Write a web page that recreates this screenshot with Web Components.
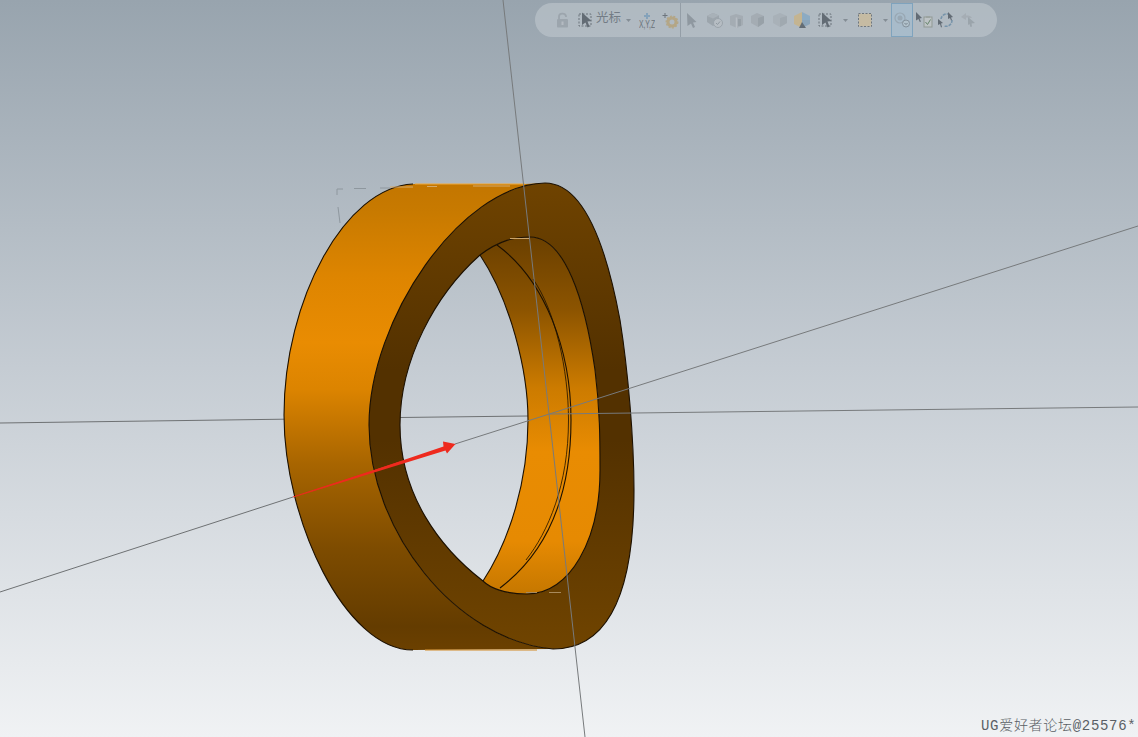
<!DOCTYPE html>
<html><head><meta charset="utf-8">
<style>html,body{margin:0;padding:0;height:100%;overflow:hidden}</style>
</head><body>
<template id="tool-t"><style>
:host{display:flex;align-items:center;justify-content:center;flex:none;height:100%;box-sizing:border-box;width:var(--w,22px)}
:host([active]){background:rgba(150,190,220,.32);border:1px solid #7fa3bd}
::slotted(svg){display:block;overflow:visible;opacity:.88}
</style><slot></slot></template>
<ug-viewport>
<ug-model slot="canvas"></ug-model>
<ug-toolbar slot="over">
<ug-tool style="--w:19px"><svg width="14" height="16" viewBox="0 0 14 16"><path d="M3 7V4.500C3 1 9 .5 10 4v1" fill="none" stroke="#9aa3ab" stroke-width="1.800"/><rect x="1" y="7" width="11" height="8.500" rx="1" fill="#9aa3ab"/><rect x="5.500" y="9.500" width="2" height="3.500" fill="#b5bcc3"/></svg></ug-tool>
<ug-tool style="--w:20px;margin-left:4px"><svg width="16" height="16" viewBox="0 0 16 16"><rect x="1" y="2" width="12" height="12" fill="none" stroke="#636b73" stroke-width="1" stroke-dasharray="2 1.500"/><path d="M4 .5 13.500 9 9.500 9.500 11.500 14.500 9.500 15.500 7.500 10.500 4 13Z" fill="#59626b"/></svg></ug-tool>
<ug-label style="--w:26px">光标</ug-label>
<ug-tool style="--w:13px"><svg width="5" height="3" viewBox="0 0 5 3"><path d="M0 0H5L2.500 3Z" fill="#7d868e"/></svg></ug-tool>
<ug-tool style="--w:24px"><svg width="18" height="15" viewBox="0 0 18 15"><path d="M8 0h2v2h2v2h-2v2H8V4H6V2h2Z" fill="#7f9fba"/><text x="1" y="14.500" textLength="16" lengthAdjust="spacingAndGlyphs" font-family="Liberation Sans" font-size="10" fill="#5f6871">X,Y,Z</text></svg></ug-tool>
<ug-tool style="--w:21px"><svg width="16" height="16" viewBox="0 0 16 16"><path d="M3 1v5M.5 3.500h5" stroke="#646c74" fill="none"/><circle cx="10" cy="10" r="4" fill="none" stroke="#b5a47e" stroke-width="3"/><circle cx="10" cy="10" r="5.800" fill="none" stroke="#b5a47e" stroke-width="1.300" stroke-dasharray="2 1.500"/></svg></ug-tool>
<ug-sep></ug-sep>
<ug-tool style="--w:22px"><svg width="10" height="15" viewBox="0 0 10 15"><path d="M0 0 9.500 9 6 9.500 8 14 6 15 4 10.500 .5 13Z" fill="#8a939b"/></svg></ug-tool>
<ug-tool style="--w:23px"><svg width="17" height="16" viewBox="0 0 17 16"><path d="M1 4 7 1 13 3.500V10L7 14 1 10Z" fill="#9aa3aa"/><path d="M1 4 7 6.500 13 3.500 7 1Z" fill="#a8b0b7"/><circle cx="12" cy="11" r="4.500" fill="#b7bec4" stroke="#98a1a8"/><path d="M10 11l1.500 1.500 2.500-3" fill="none" stroke="#8b949c"/></svg></ug-tool>
<ug-tool style="--w:21px"><svg width="14" height="15" viewBox="0 0 14 15"><path d="M0 3 6 1 13 3V12L7 15 0 12Z" fill="#a3abb2"/><path d="M6.500 4.500V15" stroke="#b8bfc5" stroke-width="1.500"/><path d="M8 6h3v7H8Z" fill="#939ca3"/></svg></ug-tool>
<ug-tool style="--w:22px"><svg width="14" height="14" viewBox="0 0 14 14"><path d="M0 3 6 0 13 3V10L7 14 0 10Z" fill="#a3abb2"/><path d="M7 5 13 3V10L7 14Z" fill="#959ea5"/></svg></ug-tool>
<ug-tool style="--w:22px"><svg width="14" height="14" viewBox="0 0 14 14"><path d="M0 3 7 0 14 3V10L7 14 0 10Z" fill="#a8b0b7"/><path d="M7 5 14 3V10L7 14Z" fill="#9ea7ae"/></svg></ug-tool>
<ug-tool style="--w:22px"><svg width="16" height="16" viewBox="0 0 16 16"><path d="M8 0 16 4V8H8Z" fill="#88a9c4"/><path d="M8 0 0 4V12L8 16V8Z" fill="#c7b48b"/><path d="M8 8H16V12L8 16Z" fill="#86a1b8"/><path d="M8 10 12 16H5Z" fill="#59626b"/></svg></ug-tool>
<ug-tool style="--w:26px"><svg width="16" height="16" viewBox="0 0 16 16"><rect x="1" y="2" width="12" height="12" fill="none" stroke="#636b73" stroke-width="1" stroke-dasharray="2 1.500"/><path d="M4 .5 13.500 9 9.500 9.500 11.500 14.500 9.500 15.500 7.500 10.500 4 13Z" fill="#59626b"/></svg></ug-tool>
<ug-tool style="--w:12px"><svg width="5" height="3" viewBox="0 0 5 3"><path d="M0 0H5L2.500 3Z" fill="#7d868e"/></svg></ug-tool>
<ug-tool style="--w:28px"><svg width="14" height="14" viewBox="0 0 14 14"><rect x=".5" y=".5" width="13" height="13" fill="#c9bc9f" stroke="#666e76" stroke-dasharray="2 1.500"/></svg></ug-tool>
<ug-tool style="--w:12px"><svg width="5" height="3" viewBox="0 0 5 3"><path d="M0 0H5L2.500 3Z" fill="#7d868e"/></svg></ug-tool>
<ug-tool active style="--w:22px"><svg width="16" height="16" viewBox="0 0 16 16"><circle cx="6" cy="6" r="5" fill="none" stroke="#97a5b0" stroke-width="1.200"/><circle cx="6" cy="6" r="2.500" fill="#97a5b0"/><circle cx="12" cy="11.500" r="3.500" fill="#b3c2cc" stroke="#808c96"/><path d="M10.500 11 12 12.500 13.500 11" fill="none" stroke="#6f7a84"/></svg></ug-tool>
<ug-tool style="--w:22px"><svg width="17" height="16" viewBox="0 0 17 16"><path d="M0 0 6 6 3.500 6.500 5 9.500 3.800 10 2.500 7 0 8.500Z" fill="#59626b"/><rect x="8" y="5" width="8" height="10" fill="#bfc5c6" stroke="#8d958f"/><rect x="10" y="4" width="4" height="2" fill="#9aa29d"/><path d="M9.500 10l2 2.500 3-5" fill="none" stroke="#5e7f62"/></svg></ug-tool>
<ug-tool style="--w:22px"><svg width="16" height="16" viewBox="0 0 16 16"><path d="M3 7A6 6 0 0 1 10 2M14 8A6 6 0 0 1 6 14" fill="none" stroke="#6f8fa8" stroke-width="1.500" stroke-dasharray="3 1"/><path d="M0 7 5 11 3 11.500 4 15 3 15.500 2 12 0 13Z" fill="#59626b"/><path d="M10 0 15 5 13 5.500 14 8 13 8.500 12 6 10 7Z" fill="#59626b"/></svg></ug-tool>
<ug-tool style="--w:21px"><svg width="14" height="14" viewBox="0 0 14 14"><path d="M0 4 5 0V2.500C8 2.500 10 3 11 5L8 5C7 4.500 6 4.500 5 4.500V7Z" fill="#a4acb3"/><path d="M7 4 14 10 10.500 10.500 11 13.500 9.500 14 8.500 11 7 12Z" fill="#98a1a8"/></svg></ug-tool>
</ug-toolbar>
<ug-watermark slot="over2">UG爱好者论坛@25576*</ug-watermark>
</ug-viewport>
<script>
function mk(tag, html){
  customElements.define(tag, class extends HTMLElement{
    constructor(){super();this.attachShadow({mode:'open'}).innerHTML=html;}
  });
}
mk('ug-viewport',`<style>:host{display:block;position:relative;width:1138px;height:737px;overflow:hidden;background:linear-gradient(#98a4ae,#c5ccd3 50%,#f0f2f4)}</style><slot name="canvas"></slot><slot name="over"></slot><slot name="over2"></slot>`);
mk('ug-tool',document.getElementById('tool-t').innerHTML);
mk('ug-sep',`<style>:host{display:block;flex:none;width:1px;height:100%;background:#949ea7}</style>`);
mk('ug-label',`<style>:host{display:block;flex:none;width:var(--w);font:12.500px/30px "Noto Sans CJK SC",sans-serif;color:#737c85;white-space:nowrap;margin-top:-6px}</style><slot></slot>`);
mk('ug-toolbar',`<style>:host{position:absolute;left:535px;top:3px;width:462px;height:34px;box-sizing:border-box;padding-left:18px;display:flex;align-items:center;background:rgba(190,198,205,.62);border-radius:17px;}</style><slot></slot>`);
mk('ug-watermark',`<style>:host{position:absolute;left:981px;top:717px;font:300 14px/18px "Liberation Mono","Noto Sans CJK SC",monospace;letter-spacing:.7px;color:#5a5f65;white-space:nowrap}</style><slot></slot>`);

const outerLeft='M413 184C345 187 284 300 284 415C284 520 345 650 413 650';
const faceLeft='M545 183C460 185 369 320 369 425C369 530 455 640 553 649';
const faceLeftRev='C455 640 369 530 369 425C369 320 460 185 545 183';
const faceRight='C585 183 607 250 620 320C628 370 634 440 634 490C634 590 610 649 553 649';
const holeUR='C500 240 515 237 530 237C565 237 585 300 595 370C600 410 600 440 600 470C600 540 570 594 527 594C505 594 490 588 483 581';
const holeL='C440 548 400 495 400 425C400 360 435 295 480 255';
const innerEdge='M480 255C510 300 528 370 528 420C528 480 510 540 483 581';
const innerEdgeRev='C510 540 528 480 528 420C528 370 510 300 480 255';

const band=outerLeft+'L553 649'+faceLeftRev+'L525 184Z';
const face=faceLeft+'C610 649 634 590 634 490C634 440 628 370 620 320C607 250 585 183 545 183Z M480 255'+holeUR+holeL+'Z';
const inner='M480 255'+holeUR+innerEdgeRev+'Z';
const stops=a=>a.map(([o,c])=>`<stop offset="${o}" stop-color="${c}"/>`).join('');
const U='gradientUnits="userSpaceOnUse" x1="0" x2="0"';
mk('ug-model',`<style>:host{display:block;width:1138px;height:737px}svg{display:block}</style>
<svg width="1138" height="737" viewBox="0 0 1138 737">
<defs>
<linearGradient id="gb" ${U} y1="184" y2="650">${stops([[0,'#c37600'],[.06,'#c87a00'],[.2,'#de8500'],[.34,'#e98c02'],[.44,'#dc8400'],[.6,'#a86500'],[.78,'#7e4c00'],[.95,'#643c00'],[1,'#6b4000']])}</linearGradient>
<linearGradient id="gf" ${U} y1="183" y2="650">${stops([[0,'#6f4300'],[.4,'#533100'],[.55,'#533100'],[1,'#704400']])}</linearGradient>
<linearGradient id="gi" ${U} y1="238" y2="595">${stops([[0,'#6b4000'],[.2,'#8c5400'],[.42,'#cc7b00'],[.6,'#e98c02'],[.85,'#e68a02'],[1,'#c57700']])}</linearGradient>
</defs>
<g fill="none" stroke="#6e7173" stroke-width="1">
<path d="M0 423 284 419.200"/><path d="M400 417.500 528 416"/><path d="M0 592 293 497"/>
</g>
<path d="M337 195V189H343M354 188.500H366M380 188H390M338 207 340 223" fill="none" stroke="#8e979e" stroke-width="1"/>
<path d="${band}" fill="url(#gb)"/>
<path d="${inner}" fill="url(#gi)"/>
<path d="${face}" fill="url(#gf)" fill-rule="evenodd"/>
<g fill="none" stroke="#1c1000" stroke-width="1.100">
<path d="${outerLeft}"/>
<path d="${faceLeft}"/>
<path d="M545 183${faceRight}"/>
<path d="M480 255${holeUR}"/>
<path d="M483 581${holeL}"/>
<path d="${innerEdge}"/>
<path d="M497 245C545 280 571 350 571 420C571 490 550 550 500 588"/>
<path d="M533 279C555 310 568.500 370 568.500 420C568.500 485 548 532 526 560" stroke-width=".8"/>
</g>
<path d="M415 184H525" stroke="#f0a93a" stroke-width="1" fill="none"/>
<path d="M390 187H413M427 186.500H437M473 186H510" stroke="#d5a96a" stroke-width="1" fill="none"/>
<path d="M425 650H537" stroke="#d18a24" stroke-width="1" fill="none"/>
<path d="M510 238.500H530" stroke="#c9a36a" stroke-width="1" fill="none"/>
<path d="M526 592.500H537M549 592.500H561" stroke="#a88a5c" stroke-width="1" fill="none"/>
<g fill="none" stroke="#777a7c" stroke-width="1">
<path d="M503 0 585 737"/>
<path d="M550 414 1138 407"/>
<path d="M455 444 528 420.800M528 420.800 1138 226"/>
</g>
<path d="M293 497 400 462" stroke="#ee2a1e" stroke-width="1" fill="none"/>
<path d="M293 497.500 443.500 446.500 443 441.500 455.500 444 447 453.500 445.500 450.500Z" fill="#ee2a1e"/>
</svg>`);
</script>
</body></html>
